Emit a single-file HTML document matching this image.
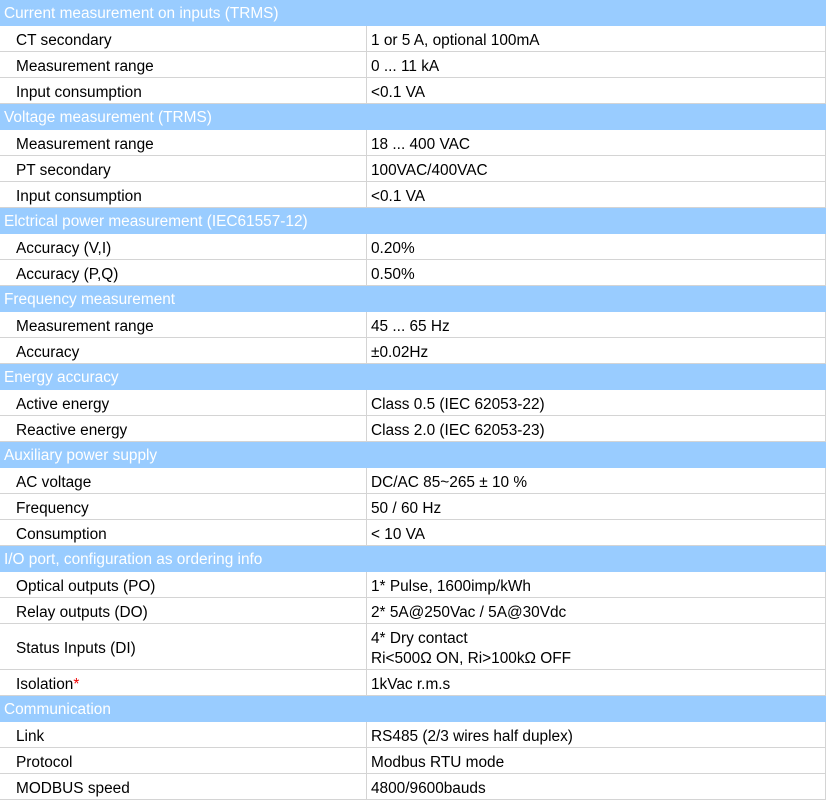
<!DOCTYPE html>
<html><head><style>
body{margin:0;width:826px;height:800px;overflow:hidden;background:#fff;font-family:"Liberation Sans",Arial,sans-serif;font-size:15.4px;color:#000}
.r{position:absolute;left:0;width:826px;box-sizing:border-box}
.h{background:#99ccff;color:#fff;height:26px;line-height:26px;padding-left:4px;padding-top:1px}
.d{height:26px;border-bottom:1px solid #d4d4d4;border-right:1px solid #d4d4d4}
.d .a{position:absolute;left:16px;top:0;bottom:-1px;padding-top:3px;display:flex;align-items:center;box-sizing:border-box}
.d .b{position:absolute;left:366px;top:0;bottom:-1px;padding-top:3px;border-left:1px solid #d4d4d4;padding-left:4px;display:flex;align-items:center;line-height:20px;box-sizing:border-box}
</style></head><body>
<div class="r h" style="top:0">Current measurement on inputs (TRMS)</div>
<div class="r d" style="top:26px"><span class="a">CT secondary</span><span class="b">1 or 5 A, optional 100mA</span></div>
<div class="r d" style="top:52px"><span class="a">Measurement range</span><span class="b">0 ... 11 kA</span></div>
<div class="r d" style="top:78px"><span class="a">Input consumption</span><span class="b">&lt;0.1 VA</span></div>
<div class="r h" style="top:104px">Voltage measurement (TRMS)</div>
<div class="r d" style="top:130px"><span class="a">Measurement range</span><span class="b">18 ... 400 VAC</span></div>
<div class="r d" style="top:156px"><span class="a">PT secondary</span><span class="b">100VAC/400VAC</span></div>
<div class="r d" style="top:182px"><span class="a">Input consumption</span><span class="b">&lt;0.1 VA</span></div>
<div class="r h" style="top:208px">Elctrical power measurement (IEC61557-12)</div>
<div class="r d" style="top:234px"><span class="a">Accuracy (V,I)</span><span class="b">0.20%</span></div>
<div class="r d" style="top:260px"><span class="a">Accuracy (P,Q)</span><span class="b">0.50%</span></div>
<div class="r h" style="top:286px">Frequency measurement</div>
<div class="r d" style="top:312px"><span class="a">Measurement range</span><span class="b">45 ... 65 Hz</span></div>
<div class="r d" style="top:338px"><span class="a">Accuracy</span><span class="b">±0.02Hz</span></div>
<div class="r h" style="top:364px">Energy accuracy</div>
<div class="r d" style="top:390px"><span class="a">Active energy</span><span class="b">Class 0.5 (IEC 62053-22)</span></div>
<div class="r d" style="top:416px"><span class="a">Reactive energy</span><span class="b">Class 2.0 (IEC 62053-23)</span></div>
<div class="r h" style="top:442px">Auxiliary power supply</div>
<div class="r d" style="top:468px"><span class="a">AC voltage</span><span class="b">DC/AC 85~265 ± 10 %</span></div>
<div class="r d" style="top:494px"><span class="a">Frequency</span><span class="b">50 / 60 Hz</span></div>
<div class="r d" style="top:520px"><span class="a">Consumption</span><span class="b">&lt; 10 VA</span></div>
<div class="r h" style="top:546px">I/O port, configuration as ordering info</div>
<div class="r d" style="top:572px"><span class="a">Optical outputs (PO)</span><span class="b">1* Pulse, 1600imp/kWh</span></div>
<div class="r d" style="top:598px"><span class="a">Relay outputs (DO)</span><span class="b">2* 5A@250Vac / 5A@30Vdc</span></div>
<div class="r d" style="top:624px;height:46px"><span class="a">Status Inputs (DI)</span><span class="b">4* Dry contact<br>Ri&lt;500Ω ON, Ri&gt;100kΩ OFF</span></div>
<div class="r d" style="top:670px"><span class="a">Isolation<span style="color:#e00">*</span></span><span class="b">1kVac r.m.s</span></div>
<div class="r h" style="top:696px">Communication</div>
<div class="r d" style="top:722px"><span class="a">Link</span><span class="b">RS485 (2/3 wires half duplex)</span></div>
<div class="r d" style="top:748px"><span class="a">Protocol</span><span class="b">Modbus RTU mode</span></div>
<div class="r d" style="top:774px"><span class="a">MODBUS speed</span><span class="b">4800/9600bauds</span></div>
</body></html>
